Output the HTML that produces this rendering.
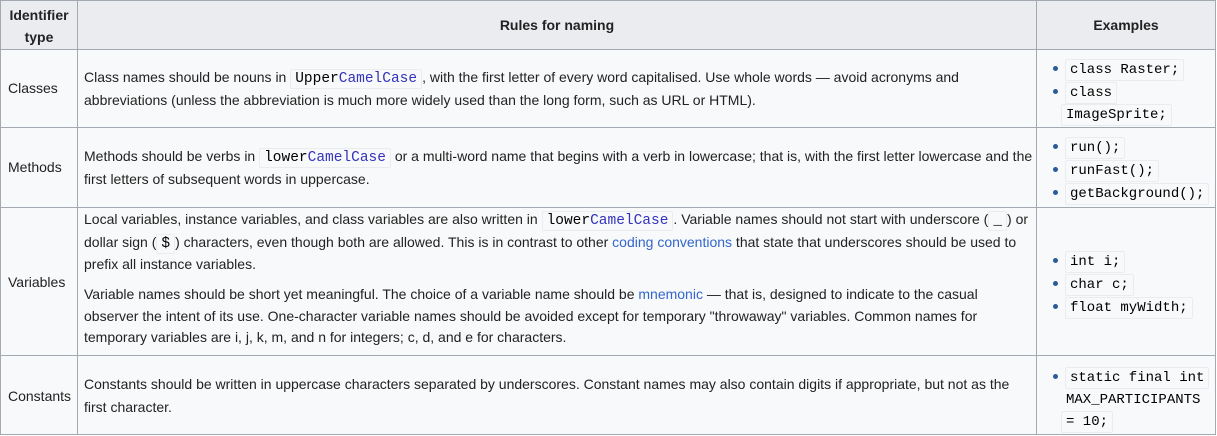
<!DOCTYPE html>
<html><head><meta charset="utf-8"><style>
body{margin:0;width:1217px;height:436px;background:#fff;position:relative;overflow:hidden;font-family:"Liberation Sans",Arial,sans-serif;font-size:14px;color:#222}
.b{position:absolute;background:#a2a9b1}
.bg{position:absolute}
.t{position:absolute;white-space:nowrap;line-height:20px;transform:translateY(-10px)}
.h{font-weight:bold;color:#222}
code{font-family:"Liberation Mono",monospace;font-size:14.5px;background:#f8f9fa;border:1px solid #eaecf0;border-radius:2px;padding:1px 4px;color:#000}
.k{color:#3333bb}
a{color:#3366cc;text-decoration:none}
.bu{position:absolute;width:5px;height:5px;border-radius:50%;background:#36c;background:#2a5b9c}
.ex code{font-size:14px;padding:2px 4px}
</style></head><body>
<div class="bg" style="left:1px;top:1px;width:1214px;height:48px;background:#eaecf0"></div>
<div class="bg" style="left:1px;top:49px;width:1214px;height:386px;background:#f8f9fa"></div>
<!-- horizontal lines -->
<div class="b" style="left:0;top:0;width:1216px;height:1px"></div>
<div class="b" style="left:0;top:49px;width:1216px;height:1px"></div>
<div class="b" style="left:0;top:127px;width:1216px;height:1px"></div>
<div class="b" style="left:0;top:207px;width:1216px;height:1px"></div>
<div class="b" style="left:0;top:355px;width:1216px;height:1px"></div>
<div class="b" style="left:0;top:434px;width:1216px;height:1px"></div>
<!-- vertical lines -->
<div class="b" style="left:0;top:0;width:1px;height:435px"></div>
<div class="b" style="left:77px;top:0;width:1px;height:435px"></div>
<div class="b" style="left:1036px;top:0;width:1px;height:435px"></div>
<div class="b" style="left:1215px;top:0;width:1px;height:435px"></div>

<div class="t h" style="left:0;width:78px;text-align:center;top:15px">Identifier</div>
<div class="t h" style="left:0;width:78px;text-align:center;top:37px">type</div>
<div class="t h" style="left:78px;width:958px;text-align:center;top:25px">Rules for naming</div>
<div class="t h" style="left:1037px;width:178px;text-align:center;top:25px">Examples</div>

<div class="t" style="left:8px;top:88px">Classes</div>
<div class="t" style="left:84px;top:77px">Class names should be nouns in <code>Upper<span class="k">CamelCase</span></code>, with the first letter of every word capitalised. Use whole words — avoid acronyms and</div>
<div class="t" style="left:84px;top:100px">abbreviations (unless the abbreviation is much more widely used than the long form, such as URL or HTML).</div>

<div class="t" style="left:8px;top:167px">Methods</div>
<div class="t" style="left:84px;top:156px">Methods should be verbs in <code>lower<span class="k">CamelCase</span></code> or a multi-word name that begins with a verb in lowercase; that is, with the first letter lowercase and the</div>
<div class="t" style="left:84px;top:179px">first letters of subsequent words in uppercase.</div>

<div class="t" style="left:8px;top:282px">Variables</div>
<div class="t" style="left:84px;top:219px">Local variables, instance variables, and class variables are also written in <code>lower<span class="k">CamelCase</span></code>. Variable names should not start with underscore (<code>_</code>) or</div>
<div class="t" style="left:84px;top:242px">dollar sign (<code>$</code>) characters, even though both are allowed. This is in contrast to other <a>coding conventions</a> that state that underscores should be used to</div>
<div class="t" style="left:84px;top:264px">prefix all instance variables.</div>
<div class="t" style="left:84px;top:294px">Variable names should be short yet meaningful. The choice of a variable name should be <a>mnemonic</a> — that is, designed to indicate to the casual</div>
<div class="t" style="left:84px;top:316px">observer the intent of its use. One-character variable names should be avoided except for temporary "throwaway" variables. Common names for</div>
<div class="t" style="left:84px;top:337px">temporary variables are i, j, k, m, and n for integers; c, d, and e for characters.</div>

<div class="t" style="left:8px;top:396px">Constants</div>
<div class="t" style="left:84px;top:384px">Constants should be written in uppercase characters separated by underscores. Constant names may also contain digits if appropriate, but not as the</div>
<div class="t" style="left:84px;top:407px">first character.</div>

<div class="ex">
<div class="bu" style="left:1053px;top:66px"></div><div class="t" style="left:1065px;top:68px"><code>class Raster;</code></div>
<div class="bu" style="left:1053px;top:89px"></div><div class="t" style="left:1065px;top:91px"><code>class</code></div>
<div class="t" style="left:1061px;top:113px"><code>ImageSprite;</code></div>
<div class="bu" style="left:1053px;top:144px"></div><div class="t" style="left:1065px;top:146px"><code>run();</code></div>
<div class="bu" style="left:1053px;top:167px"></div><div class="t" style="left:1065px;top:169px"><code>runFast();</code></div>
<div class="bu" style="left:1053px;top:190px"></div><div class="t" style="left:1065px;top:192px"><code>getBackground();</code></div>
<div class="bu" style="left:1053px;top:258px"></div><div class="t" style="left:1065px;top:260px"><code>int i;</code></div>
<div class="bu" style="left:1053px;top:281px"></div><div class="t" style="left:1065px;top:283px"><code>char c;</code></div>
<div class="bu" style="left:1053px;top:304px"></div><div class="t" style="left:1065px;top:306px"><code>float myWidth;</code></div>
<div class="bu" style="left:1053px;top:374px"></div><div class="t" style="left:1065px;top:376px"><code>static final int</code></div>
<div class="t" style="left:1061px;top:398px"><code style="border-color:transparent">MAX_PARTICIPANTS</code></div>
<div class="t" style="left:1061px;top:420px"><code>= 10;</code></div>
</div>
</body></html>
